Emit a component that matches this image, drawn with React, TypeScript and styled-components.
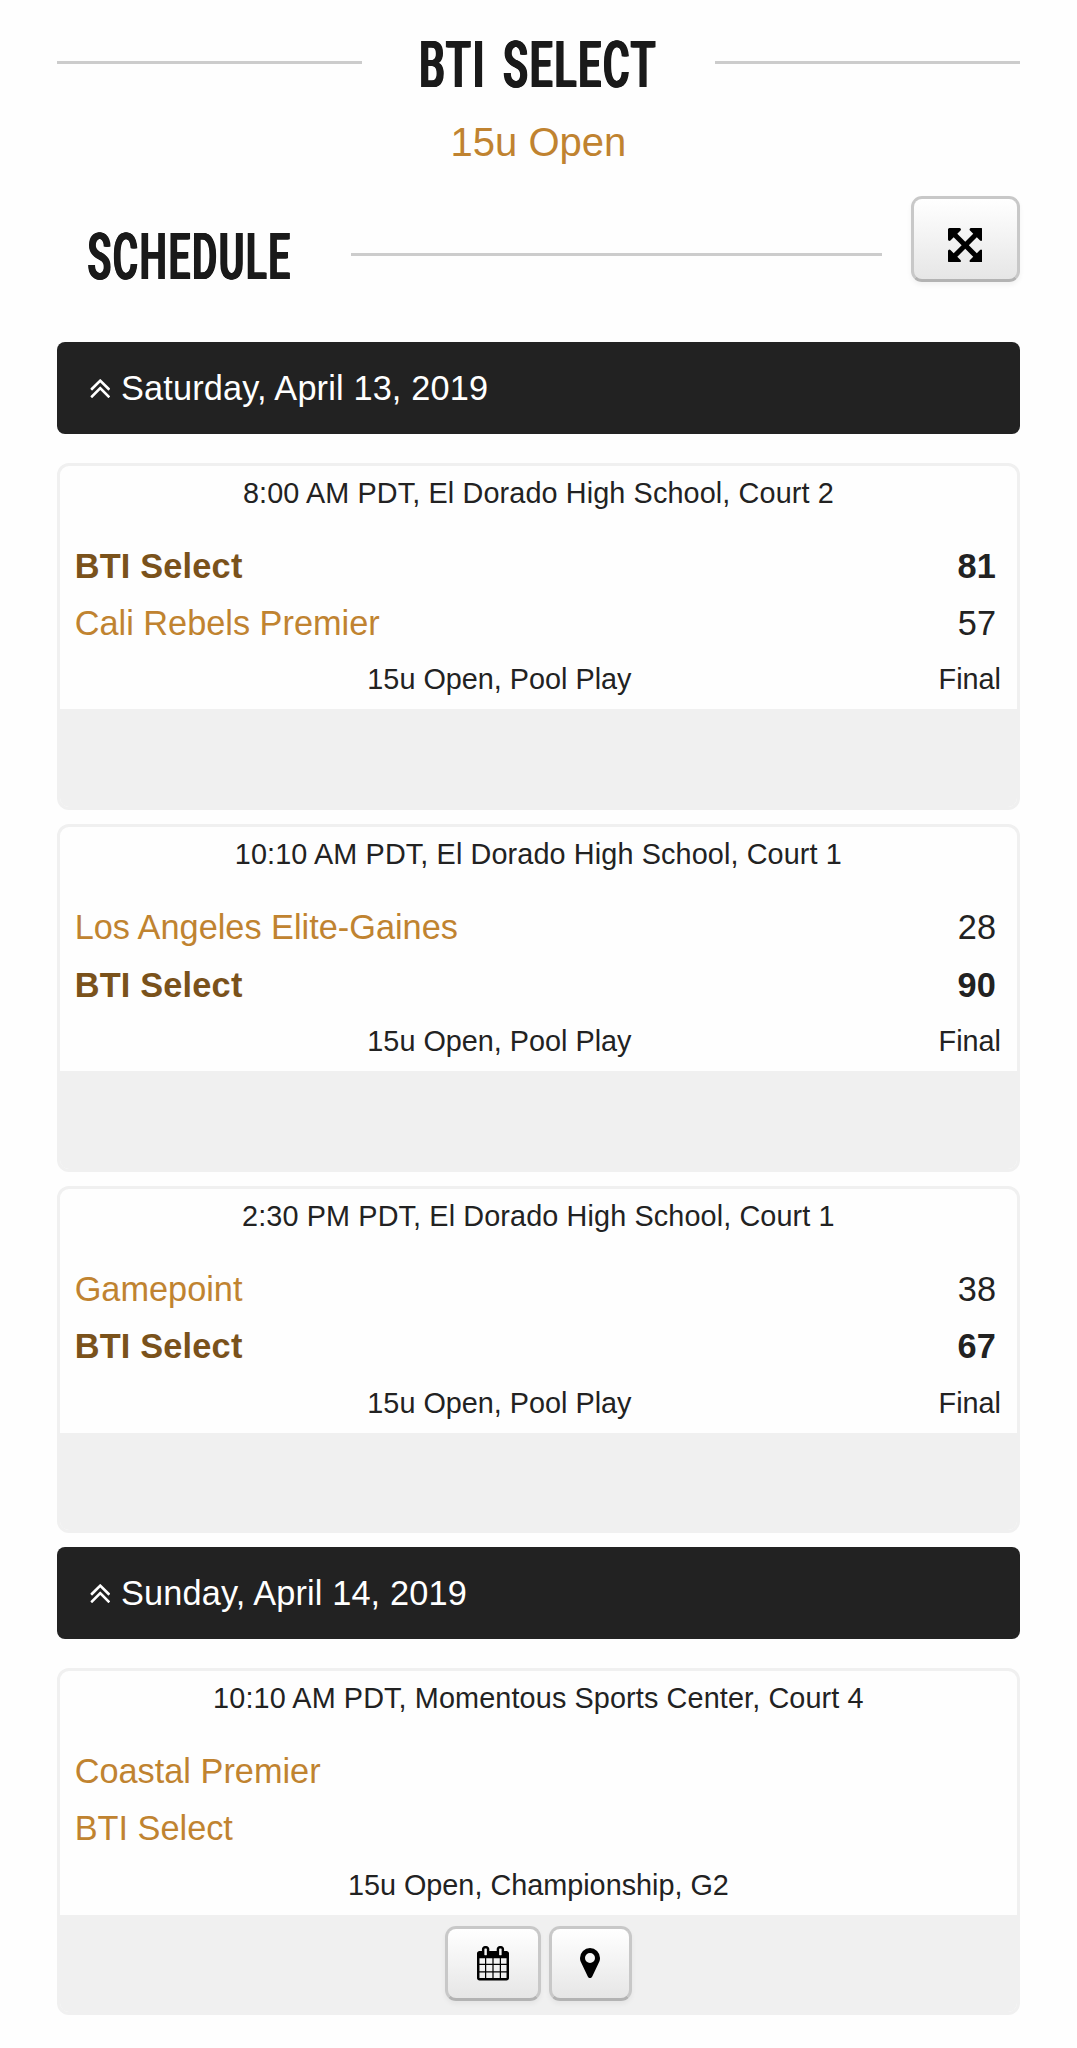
import React from "react";
import styled, { createGlobalStyle } from "styled-components";

const GlobalStyle = createGlobalStyle`
  body {
    margin: 0;
    background: #fefefe;
    color: #222;
    font-family: "Liberation Sans", Arial, sans-serif;
  }
  *, *::before, *::after { box-sizing: border-box; }
`;

const Page = styled.main`
  width: 1077px;
  height: 2048px;
  padding: 0 57.5px 0 57.3px;
  overflow: hidden;
`;

const TitleRow = styled.header`
  display: flex;
  align-items: center;
  height: 124.6px;
`;

const Rule = styled.hr<{ $width?: number }>`
  flex: ${(p) => (p.$width ? `0 0 ${p.$width}px` : "1 1 0")};
  height: 3px;
  margin: 0;
  border: 0;
  background: #ccc;
`;

const Display = styled.span<{ $scale: number; $gap?: number }>`
  flex: none;
  font-family: Roboto, "Liberation Sans", sans-serif;
  font-size: 64.3px;
  font-weight: 500;
  line-height: 70px;
  color: #1a1a1a;
  white-space: nowrap;
  letter-spacing: 3.5px;
  word-spacing: ${(p) => p.$gap ?? 0}px;
  text-shadow: 1px 0 #1a1a1a, -1px 0 #1a1a1a, 1.8px 0 #1a1a1a, -1.8px 0 #1a1a1a;
  transform: scaleX(${(p) => p.$scale});
`;

const TitleBox = styled.h1`
  display: flex;
  flex: 1;
  justify-content: center;
  min-width: 0;
  margin: 0;
  padding-top: 5px;
`;

const Division = styled.a`
  display: block;
  margin-top: -8px;
  text-align: center;
  font-size: 40px;
  line-height: 50px;
  color: #c08330;
`;

const SectionRow = styled.div`
  display: flex;
  align-items: center;
  height: 86px;
  margin-top: 29.4px;
`;

const SectionBox = styled.h2`
  display: flex;
  flex: 0 0 265px;
  justify-content: center;
  width: 265px;
  margin: 0 29px 0 0;
  padding-top: 36.5px;
`;

const SectionRule = styled(Rule)`
  margin: 31px 29px 0 0;
`;

const Button = styled.button<{ $width: number; $height: number; $drop?: number }>`
  display: flex;
  flex: none;
  align-items: center;
  justify-content: center;
  width: ${(p) => p.$width}px;
  height: ${(p) => p.$height}px;
  padding: ${(p) => p.$drop ?? 0}px 0 0;
  border: 3px solid #c8c8c8;
  border-bottom-color: #b3b3b3;
  border-radius: 11px;
  background: linear-gradient(#fff, #e6e6e6);
  box-shadow: 0 3px 5px rgba(0, 0, 0, 0.05);
  color: #000;
`;

const DayBar = styled.h3`
  display: flex;
  align-items: center;
  gap: 10.5px;
  height: 91.7px;
  margin: 0 0 28.7px;
  padding-left: 32.7px;
  border-radius: 8px;
  background: #222;
  color: #fff;
  font-size: 34.3px;
  font-weight: 400;
  letter-spacing: 0.15px;
`;

const Schedule = styled.div`
  margin-top: 60.3px;
`;

const Card = styled.article`
  display: flex;
  flex-direction: column;
  height: 347.3px;
  margin-bottom: 14.3px;
  border: 3px solid #f0f0f0;
  border-radius: 12px;
  overflow: hidden;
`;

const Venue = styled.div`
  height: 72.2px;
  text-align: center;
  font-size: 28.8px;
  line-height: 55.4px;
  letter-spacing: 0.12px;
`;

const TeamRow = styled.div<{ $winner?: boolean }>`
  display: flex;
  justify-content: space-between;
  height: 57.3px;
  padding: 0 20.5px 0 14.4px;
  font-size: 34.3px;
  line-height: 57.3px;
  font-weight: ${(p) => (p.$winner ? 700 : 400)};
  letter-spacing: ${(p) => (p.$winner ? 0.2 : 0)}px;
`;

const TeamLink = styled.a<{ $winner?: boolean }>`
  color: ${(p) => (p.$winner ? "#7a521b" : "#c08330")};
`;

const StatusRow = styled.div`
  display: flex;
  height: 57px;
  font-size: 28.8px;
  line-height: 55.6px;
`;

const Stage = styled.span`
  flex: 1;
  text-align: center;
`;

const Status = styled.span`
  padding-right: 15.5px;
`;

const Actions = styled.footer`
  display: flex;
  flex: 1;
  justify-content: center;
  gap: 8.5px;
  padding-top: 11.5px;
  background: #f0f0f0;
`;

const paths = {
  expand: {
    box: "128 128 1536 1536",
    d: "M1411 541l-355 355 355 355 144-144q29-31 70-14 39 17 39 59v448q0 26-19 45t-45 19h-448q-42 0-59-40-17-39 14-69l144-144-355-355-355 355 144 144q31 30 14 69-17 40-59 40h-448q-26 0-45-19t-19-45v-448q0-42 40-59 39-17 69 14l144 144 355-355-355-355-144 144q-19 19-45 19-12 0-24-5-40-17-40-59v-448q0-26 19-45t45-19h448q42 0 59 40 17 39-14 69l-144 144 355 355 355-355-144-144q-31-30-14-69 17-40 59-40h448q26 0 45 19t19 45v448q0 42-39 59-13 5-25 5-26 0-45-19z",
  },
  calendar: {
    box: "64 0 1664 1792",
    d: "M192 1664h288v-288h-288v288zm352 0h320v-288h-320v288zm-352-352h288v-320h-288v320zm352 0h320v-320h-320v320zm-352-384h288v-288h-288v288zm736 736h320v-288h-320v288zm-384-736h320v-288h-320v288zm768 736h288v-288h-288v288zm-384-352h320v-320h-320v320zm-352-864v-288q0-13-9.500-22.500t-22.500-9.500h-64q-13 0-22.500 9.500t-9.500 22.500v288q0 13 9.500 22.500t22.500 9.500h64q13 0 22.500-9.500t9.500-22.500zm736 864h288v-320h-288v320zm-384-384h320v-288h-320v288zm384 0h288v-288h-288v288zm32-480v-288q0-13-9.500-22.500t-22.500-9.500h-64q-13 0-22.500 9.500t-9.500 22.500v288q0 13 9.500 22.500t22.500 9.500h64q13 0 22.500-9.500t9.500-22.500zm384-64v1280q0 52-38 90t-90 38h-1408q-52 0-90-38t-38-90v-1280q0-52 38-90t90-38h128v-96q0-66 47-113t113-47h64q66 0 113 47t47 113v96h384v-96q0-66 47-113t113-47h64q66 0 113 47t47 113v96h128q52 0 90 38t38 90z",
  },
  marker: {
    box: "384 128 1024 1536",
    d: "M1152 640q0-106-75-181t-181-75-181 75-75 181 75 181 181 75 181-75 75-181zm256 0q0 109-33 179l-364 774q-16 33-47.500 52t-67.500 19-67.500-19-46.500-52l-365-774q-33-70-33-179 0-212 150-362t362-150 362 150 150 362z",
  },
  collapse: {
    box: "397 429 998 966",
    d: "M1395 1312q0 13-10 23l-50 50q-10 10-23 10t-23-10l-393-393-393 393q-10 10-23 10t-23-10l-50-50q-10-10-10-23t10-23l466-466q10-10 23-10t23 10l466 466q10 10 10 23zm0-384q0 13-10 23l-50 50q-10 10-23 10t-23-10l-393-393-393 393q-10 10-23 10t-23-10l-50-50q-10-10-10-23t10-23l466-466q10-10 23-10t23 10l466 466q10 10 10 23z",
  },
};

function Icon({ name, width, height }: { name: keyof typeof paths; width: number; height: number }) {
  return (
    <svg width={width} height={height} viewBox={paths[name].box} fill="currentColor" aria-hidden>
      <path d={paths[name].d} />
    </svg>
  );
}

type Team = { name: string; score?: number; winner?: boolean };
type Game = { venue: string; teams: Team[]; stage: string; status?: string };
type Day = { date: string; games: Game[] };

const days: Day[] = [
  {
    date: "Saturday, April 13, 2019",
    games: [
      {
        venue: "8:00 AM PDT, El Dorado High School, Court 2",
        teams: [
          { name: "BTI Select", score: 81, winner: true },
          { name: "Cali Rebels Premier", score: 57 },
        ],
        stage: "15u Open, Pool Play",
        status: "Final",
      },
      {
        venue: "10:10 AM PDT, El Dorado High School, Court 1",
        teams: [
          { name: "Los Angeles Elite-Gaines", score: 28 },
          { name: "BTI Select", score: 90, winner: true },
        ],
        stage: "15u Open, Pool Play",
        status: "Final",
      },
      {
        venue: "2:30 PM PDT, El Dorado High School, Court 1",
        teams: [
          { name: "Gamepoint", score: 38 },
          { name: "BTI Select", score: 67, winner: true },
        ],
        stage: "15u Open, Pool Play",
        status: "Final",
      },
    ],
  },
  {
    date: "Sunday, April 14, 2019",
    games: [
      {
        venue: "10:10 AM PDT, Momentous Sports Center, Court 4",
        teams: [{ name: "Coastal Premier" }, { name: "BTI Select" }],
        stage: "15u Open, Championship, G2",
      },
    ],
  },
];

function GameCard({ game }: { game: Game }) {
  return (
    <Card>
      <Venue>{game.venue}</Venue>
      {game.teams.map((team) => (
        <TeamRow key={team.name} $winner={team.winner}>
          <TeamLink $winner={team.winner}>{team.name}</TeamLink>
          {team.score !== undefined && <span>{team.score}</span>}
        </TeamRow>
      ))}
      <StatusRow>
        <Stage>{game.stage}</Stage>
        {game.status && <Status>{game.status}</Status>}
      </StatusRow>
      <Actions>
        {!game.status && (
          <>
            <Button $width={95.3} $height={74.5} aria-label="Add to calendar">
              <Icon name="calendar" width={32} height={34.5} />
            </Button>
            <Button $width={82.5} $height={74.5} aria-label="Show location">
              <Icon name="marker" width={20} height={30} />
            </Button>
          </>
        )}
      </Actions>
    </Card>
  );
}

export default function App() {
  return (
    <>
      <GlobalStyle />
      <Page>
        <TitleRow>
          <Rule $width={304.4} />
          <TitleBox>
            <Display $scale={0.622} $gap={8}>BTI SELECT</Display>
          </TitleBox>
          <Rule $width={304.4} />
        </TitleRow>
        <Division>15u Open</Division>
        <SectionRow>
          <SectionBox>
            <Display $scale={0.59}>SCHEDULE</Display>
          </SectionBox>
          <SectionRule />
          <Button $width={109} $height={86} $drop={12} aria-label="Expand all">
            <Icon name="expand" width={34.5} height={34.5} />
          </Button>
        </SectionRow>
        <Schedule>
          {days.map((day) => (
            <section key={day.date}>
              <DayBar>
                <Icon name="collapse" width={20.5} height={19} />
                {day.date}
              </DayBar>
              {day.games.map((game) => (
                <GameCard key={game.venue} game={game} />
              ))}
            </section>
          ))}
        </Schedule>
      </Page>
    </>
  );
}
